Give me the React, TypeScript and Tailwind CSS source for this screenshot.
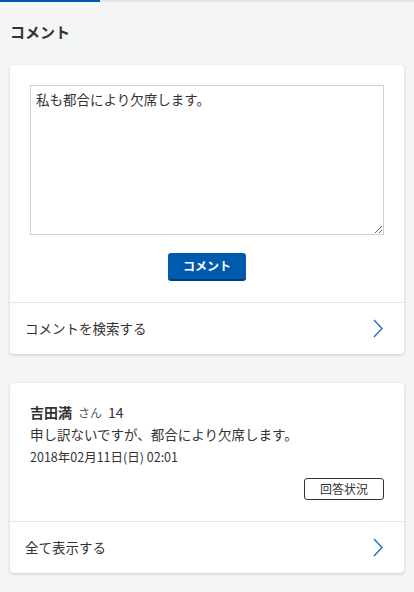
import React from 'react'

const font = "font-['Meiryo','Noto_Sans_CJK_JP',sans-serif]"

const Chevron = () => (
  <svg width="10" height="19" viewBox="0 0 10 19" fill="none">
    <path d="M1 1l8 8.5L1 18" stroke="#1f6fc1" strokeWidth="1.4" />
  </svg>
)

const LinkRow = ({ label }: { label: string }) => (
  <div className="flex items-center justify-between h-[52px] border-t border-[#e6e8e8] pl-[15px] pr-[21px]">
    <span className="text-[13.5px] text-[#333]">{label}</span>
    <Chevron />
  </div>
)

const App = () => {
  return (
    <div className={`w-[414px] h-[592px] bg-[#f4f5f5] ${font} text-[#333] overflow-hidden`}>
      <div className="flex h-[2px]">
        <div className="w-[100px] bg-[#005bac]" />
        <div className="flex-1 bg-[#e4e6e6]" />
      </div>

      <h2 className="px-[10px] pt-[19px] pb-[23px] text-[15px] font-bold leading-[21px]">コメント</h2>

      <div className="mx-[10px] bg-white rounded-[4px] shadow-[0_1px_3px_rgba(0,0,0,0.18)]">
        <div className="px-[20px] pt-[20px] pb-[21px] flex flex-col items-center">
          <textarea
            className="w-full h-[150px] border border-[#cfcfda] px-[5px] py-[3px] text-[13.5px] leading-[20px] text-[#333] resize-y outline-none"
            defaultValue="私も都合により欠席します。"
          />
          <button className="mt-[18px] w-[78px] h-[28px] rounded-[3px] bg-[#005bac] border-b-2 border-[#003f7d] text-white text-[12px] font-bold">
            コメント
          </button>
        </div>
        <LinkRow label="コメントを検索する" />
      </div>

      <div className="mx-[10px] mt-[29px] bg-white rounded-[4px] shadow-[0_1px_3px_rgba(0,0,0,0.18)]">
        <div className="px-[20px] pt-[18px] pb-[21px]">
          <div className="flex items-baseline gap-[6px] leading-[22px]">
            <span className="text-[14px] font-bold">吉田満</span>
            <span className="text-[12px] text-[#555]">さん</span>
            <span className="text-[14px]">14</span>
          </div>
          <p className="text-[13.5px] leading-[21px]">申し訳ないですが、都合により欠席します。</p>
          <p className="text-[12.5px] leading-[20px] mt-[2px]">2018年02月11日(日) 02:01</p>
          <div className="flex justify-end mt-[11px]">
            <button className="w-[80px] h-[22px] rounded-[3px] border border-[#333] text-[12px] leading-none">
              回答状況
            </button>
          </div>
        </div>
        <LinkRow label="全て表示する" />
      </div>
    </div>
  )
}

export default App
